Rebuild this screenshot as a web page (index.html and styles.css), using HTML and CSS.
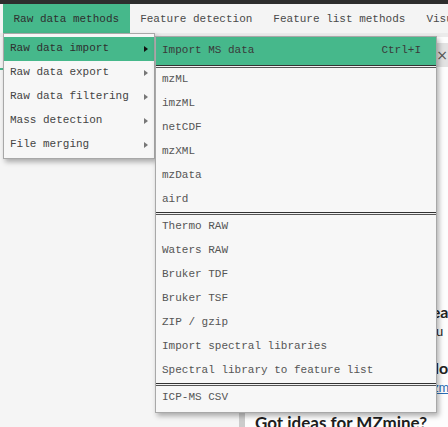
FILE: index.html
```html
<!DOCTYPE html>
<html>
<head>
<meta charset="utf-8">
<link rel="stylesheet" href="styles.css">
</head>
<body>
<div class="topstrip"></div>
<div class="menubar">
  <div class="mb-item active">Raw data methods</div>
  <div class="mb-item">Feature detection</div>
  <div class="mb-item">Feature list methods</div>
  <div class="mb-item">Visualization</div>
</div>
<div class="subbar"></div>
<div class="workspace">
  <div class="sidebar">
    <div class="tabs"><span class="tab">|</span></div>
  </div>
  <div class="doc">
    <div class="close">×</div>
    <div class="notes">
      <div class="n1">Read</div>
      <div class="n2">You</div>
      <div class="n3">Flow</div>
      <div class="n4"><a href="#">mzmine.org</a></div>
    </div>
    <div class="quote">
      <div class="q-title">Got ideas for MZmine?</div>
    </div>
  </div>
</div>

<div class="menu menu1">
  <div class="row hl"><span>Raw data import</span><i class="tri"></i></div>
  <div class="row"><span>Raw data export</span><i class="tri"></i></div>
  <div class="row"><span>Raw data filtering</span><i class="tri"></i></div>
  <div class="row"><span>Mass detection</span><i class="tri"></i></div>
  <div class="row"><span>File merging</span><i class="tri"></i></div>
</div>

<div class="menu menu2">
  <div class="row big hl"><span>Import MS data</span><span class="key">Ctrl+I</span></div>
  <div class="sep"></div>
  <div class="row"><span>mzML</span></div>
  <div class="row"><span>imzML</span></div>
  <div class="row"><span>netCDF</span></div>
  <div class="row"><span>mzXML</span></div>
  <div class="row"><span>mzData</span></div>
  <div class="row"><span>aird</span></div>
  <div class="sep"></div>
  <div class="row"><span>Thermo RAW</span></div>
  <div class="row"><span>Waters RAW</span></div>
  <div class="row"><span>Bruker TDF</span></div>
  <div class="row"><span>Bruker TSF</span></div>
  <div class="row"><span>ZIP / gzip</span></div>
  <div class="row"><span>Import spectral libraries</span></div>
  <div class="row"><span>Spectral library to feature list</span></div>
  <div class="sep"></div>
  <div class="row"><span>ICP-MS CSV</span></div>
</div>
</body>
</html>
```

FILE: styles.css
```css
html, body {
  margin: 0;
  padding: 0;
}
body {
  width: 448px;
  height: 427px;
  overflow: hidden;
  position: relative;
  background: #f5f5f5;
  font-family: "Liberation Mono", monospace;
}
.topstrip {
  height: 4px;
  background: #2d2d2d;
}
.menubar {
  height: 29px;
  display: flex;
  background: #f4f4f4;
  padding-left: 3px;
  white-space: nowrap;
  overflow: hidden;
  font-size: 11px;
  color: #4a4a4a;
}
.mb-item {
  padding: 1px 10.5px 0;
  line-height: 28px;
  flex: none;
}
.mb-item.active {
  background: #46b88b;
  color: #2f2f2f;
}
.subbar {
  height: 4px;
  background: #ebebeb;
}
.workspace {
  display: flex;
  height: 390px;
}
.sidebar {
  width: 239px;
  flex: none;
  background: #f5f5f5;
}
.tabs {
  height: 33px;
  border-bottom: 2px solid #46b88b;
  background: #f3f3f3;
  font-size: 11px;
  color: #999;
  padding-top: 8px;
  box-sizing: border-box;
}
.tab {
  padding-left: 1px;
}
.doc {
  flex: 1;
  min-width: 0;
  overflow: hidden;
  background: #fdfdfd;
  display: flex;
  flex-direction: column;
  font-family: Lato, "Open Sans", sans-serif;
}
.close {
  align-self: flex-end;
  margin-top: 6px;
  width: 13px;
  height: 24px;
  background: #e2e2e2;
  color: #555;
  font-size: 14px;
  line-height: 24px;
  text-align: right;
  font-family: "DejaVu Sans", sans-serif;
}
.notes {
  margin-top: 235px;
  padding-left: 183px;
  white-space: nowrap;
  color: #222;
}
.n1, .n3 {
  font-weight: bold;
  font-size: 16px;
  line-height: 20px;
}
.n2, .n4 {
  font-size: 13px;
  line-height: 18px;
}
.n3 {
  margin-top: 18px;
  padding-left: 4px;
}
.n4 a {
  color: #2a6db5;
  text-decoration: underline;
}
.quote {
  margin-top: 3px;
  border-left: 6px solid #cccccc;
  padding: 12px 0 0 10px;
  flex: 1;
}
.q-title {
  font-weight: bold;
  font-size: 17px;
  line-height: 24px;
  color: #1e1e1e;
  white-space: nowrap;
}

/* menus */
.menu {
  position: absolute;
  background: #f7f7f7;
  border: 1px solid #a8a8a8;
  box-shadow: 2px 3px 5px rgba(0, 0, 0, 0.3);
  font-size: 11px;
  white-space: nowrap;
}
.menu1 {
  left: 3px;
  top: 33px;
  width: 150px;
  padding: 3px 0 1px;
  color: #444;
}
.menu1 .row {
  height: 24px;
  line-height: 23px;
  padding: 0 6px 1px 6px;
  box-sizing: border-box;
  display: flex;
  justify-content: space-between;
  align-items: center;
}
.tri {
  width: 0;
  height: 0;
  border-top: 3.5px solid transparent;
  border-bottom: 3.5px solid transparent;
  border-left: 4px solid #777;
  margin-top: 1px;
}
.row.hl .tri {
  border-left-color: #111;
}
.menu2 {
  left: 155px;
  top: 36px;
  width: 280px;
  padding: 0 0 2px;
  color: #555;
}
.menu2 .row {
  height: 24px;
  line-height: 22px;
  padding: 0 15px 2px 6px;
  box-sizing: border-box;
  display: flex;
  justify-content: space-between;
}
.menu2 .row.big {
  height: 28px;
  line-height: 27px;
  padding-bottom: 1px;
  color: #3a3a3a;
}
.row.hl {
  background: #46b88b;
  color: #2f2f2f;
}
.sep {
  height: 3px;
  box-sizing: border-box;
  border-top: 1px solid #333;
  border-bottom: 1px solid #555;
  background: #f2f2f2;
}
```
